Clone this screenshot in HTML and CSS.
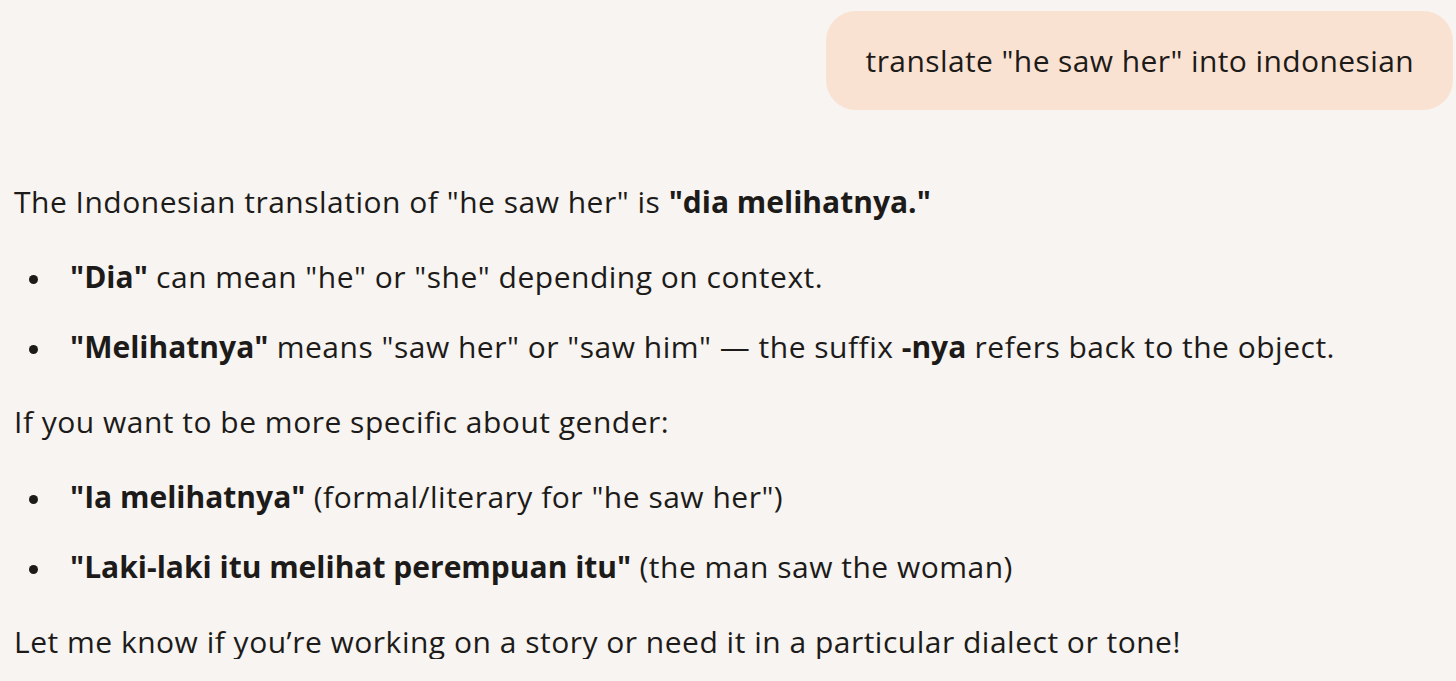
FILE: index.html
```html
<!DOCTYPE html>
<html>
<head>
<meta charset="utf-8">
<link rel="stylesheet" href="styles.css">
</head>
<body>
<div class="chat">
  <div class="user-row">
    <div class="bubble">translate "he saw her" into indonesian</div>
  </div>
  <div class="answer">
    <p>The Indonesian translation of "he saw her" is <strong>"dia melihatnya."</strong></p>
    <ul>
      <li><strong>"Dia"</strong> can mean "he" or "she" depending on context.</li>
      <li><strong>"Melihatnya"</strong> means "saw her" or "saw him" — the suffix <strong>-nya</strong> refers back to the object.</li>
    </ul>
    <p>If you want to be more specific about gender:</p>
    <ul>
      <li><strong>"Ia melihatnya"</strong> (formal/literary for "he saw her")</li>
      <li><strong>"Laki-laki itu melihat perempuan itu"</strong> (the man saw the woman)</li>
    </ul>
    <p>Let me know if you’re working on a story or need it in a particular dialect or tone!</p>
  </div>
</div>
</body>
</html>
```
FILE: styles.css
```css
html, body {
  margin: 0;
  padding: 0;
  background: #f7f4f1;
}
body {
  font-family: "Open Sans", sans-serif;
  color: #1d1b19;
  font-size: 30px;
  letter-spacing: 0.5px;
}
.chat {
  padding: 11px 3px 0 14px;
}
.user-row {
  display: flex;
  justify-content: flex-end;
}
.bubble {
  background: #fae2d2;
  border-radius: 30px;
  height: 99px;
  box-sizing: border-box;
  padding: 0 39px 0 40px;
  display: flex;
  align-items: center;
  letter-spacing: 0.4px;
}
.answer {
  padding-top: 74px;
}
.answer p {
  margin: 0;
  line-height: 35px;
}
.answer ul {
  margin: 40px 0;
  padding-left: 15px;
  list-style: none;
}
.answer li {
  line-height: 35px;
  margin-bottom: 35px;
}
.answer li::before {
  content: "";
  display: inline-block;
  width: 9px;
  height: 9px;
  border-radius: 50%;
  background: #1d1b19;
  vertical-align: middle;
  margin-right: 32px;
}
.answer li:last-child {
  margin-bottom: 0;
}
strong {
  font-weight: 700;
  letter-spacing: 0;
}
```
